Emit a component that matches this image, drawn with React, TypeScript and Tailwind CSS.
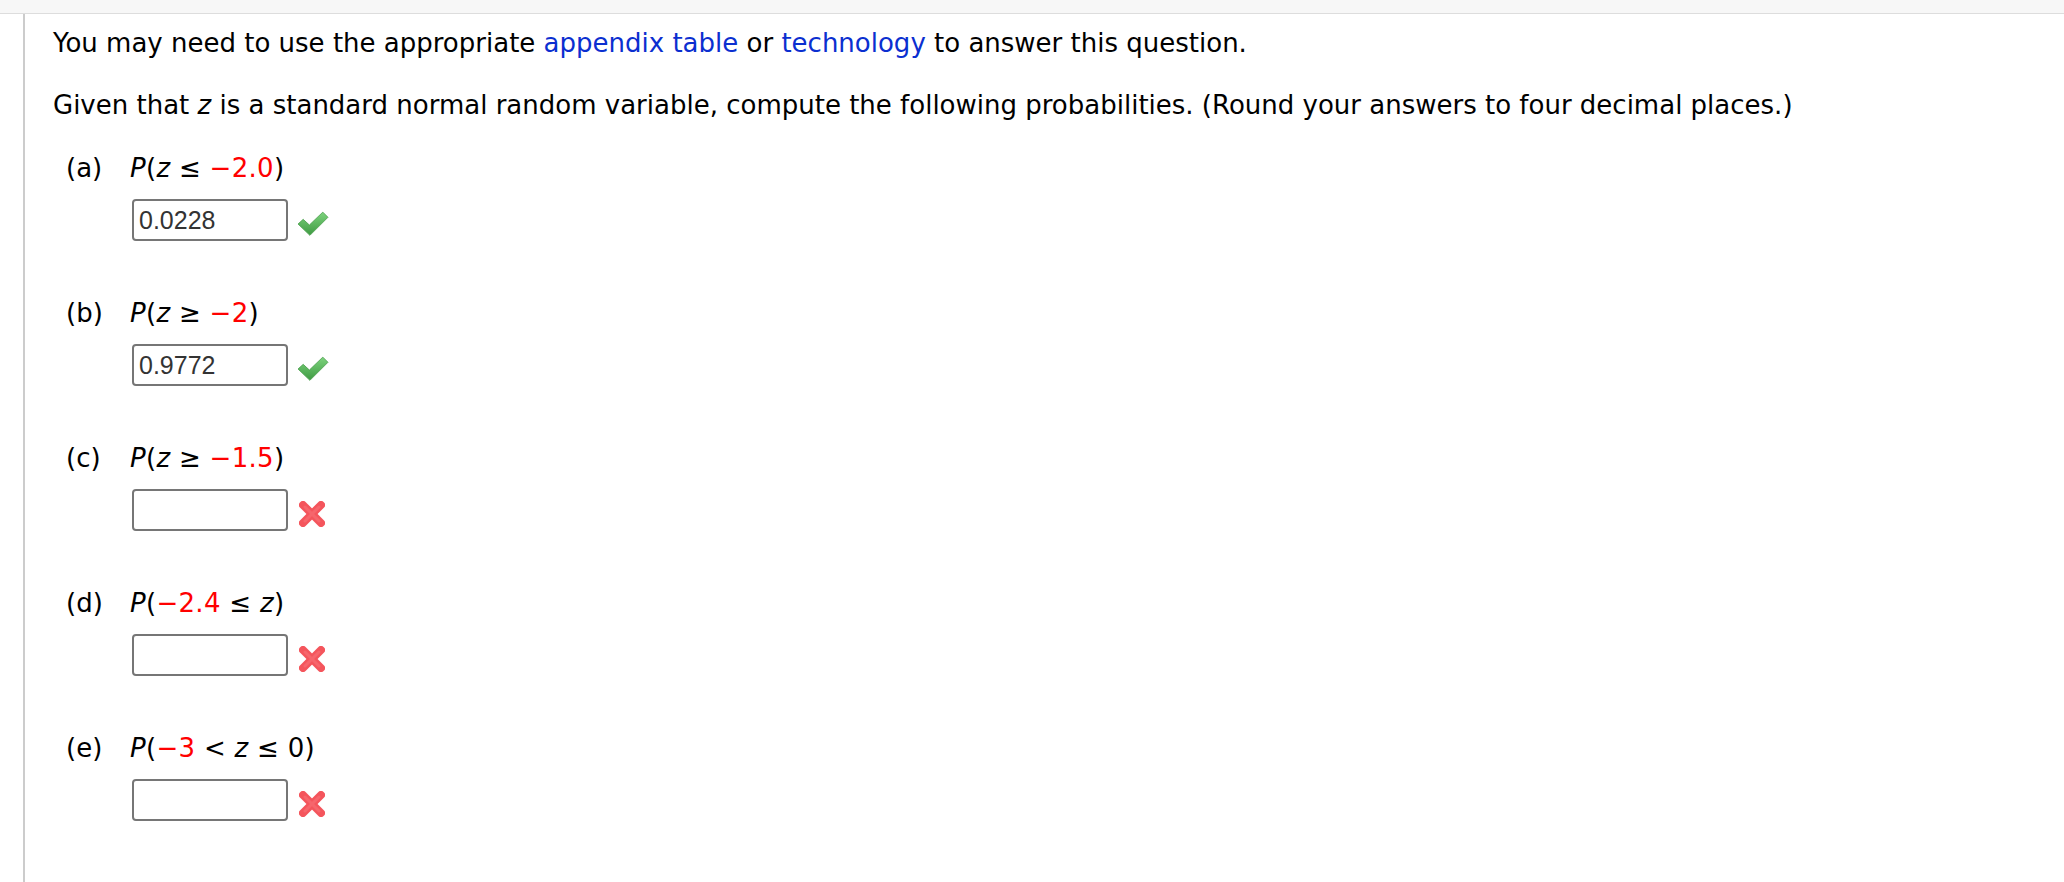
import React from "react";

const verdana = { fontFamily: '"DejaVu Sans", Verdana, sans-serif' };

function Check() {
  return (
    <svg width="32" height="26" viewBox="0 0 31 25" className="mt-[12px]">
      <defs>
        <linearGradient id="gc" x1="0" y1="0" x2="0" y2="1">
          <stop offset="0" stopColor="#7cd37c" />
          <stop offset="1" stopColor="#3f9a43" />
        </linearGradient>
      </defs>
      <path
        d="M1 12.5 L6 8 L12 13.5 L25 1 L30 6 L12.5 23.5 Z"
        fill="url(#gc)"
        stroke="#4a9f4c"
        strokeWidth="0.8"
        strokeLinejoin="round"
      />
    </svg>
  );
}

function Cross() {
  return (
    <svg width="30" height="32" viewBox="0 0 30 32" className="mt-[9px]">
      <defs>
        <filter id="bl" x="-20%" y="-20%" width="140%" height="140%">
          <feGaussianBlur stdDeviation="0.7" />
        </filter>
      </defs>
      <g filter="url(#bl)" stroke="#f4555c" strokeWidth="8" strokeLinecap="round">
        <line x1="6" y1="7" x2="24" y2="25" />
        <line x1="24" y1="7" x2="6" y2="25" />
      </g>
      <g stroke="#f87278" strokeWidth="3" strokeLinecap="round" opacity="0.6">
        <line x1="8" y1="9" x2="22" y2="23" />
        <line x1="22" y1="9" x2="8" y2="23" />
      </g>
    </svg>
  );
}

function Item({
  label,
  expr,
  value,
  ok,
}: {
  label: string;
  expr: React.ReactNode;
  value: string;
  ok: boolean;
}) {
  return (
    <div className="h-[145px]">
      <div className="flex items-center h-[36px]">
        <span className="w-[77px] pl-[13px] shrink-0">{label}</span>
        <span className="tracking-[0.3px]">{expr}</span>
      </div>
      <div className="flex ml-[79px] mt-[13px]">
        <div
          className="w-[156px] h-[42px] border-2 border-[#767676] rounded-[4px] flex items-center pl-[5px] text-[25px] text-[#333]"
          style={{ fontFamily: '"Liberation Sans", Arial, sans-serif' }}
        >
          {value}
        </div>
        <div className="ml-[9px]">{ok ? <Check /> : <Cross />}</div>
      </div>
    </div>
  );
}

const R = ({ children }: { children: React.ReactNode }) => (
  <span className="text-[#ff0000]">{children}</span>
);
const I = ({ children }: { children: React.ReactNode }) => <i>{children}</i>;

export default function App() {
  return (
    <div className="w-[2064px] h-[882px] bg-white text-black overflow-hidden" style={verdana}>
      <div className="h-[14px] bg-[#f7f7f7] border-b border-[#dddddd]" />
      <div className="flex h-[868px]">
        <div className="w-[23px] shrink-0" />
        <div className="w-[2px] bg-[#cccccc] shrink-0" />
        <div className="pl-[28px] pt-[11px] text-[26px] leading-[36px]">
          <p>
            You may need to use the appropriate{" "}
            <span className="text-[#0b2fd0]">appendix table</span> or{" "}
            <span className="text-[#0b2fd0]">technology</span> to answer this question.
          </p>
          <p className="mt-[26px]">
            Given that <I>z</I> is a standard normal random variable, compute the following
            probabilities. (Round your answers to four decimal places.)
          </p>
          <div className="mt-[27px]">
            <Item
              label="(a)"
              expr={
                <>
                  <I>P</I>(<I>z</I> ≤ <R>−2.0</R>)
                </>
              }
              value="0.0228"
              ok
            />
            <Item
              label="(b)"
              expr={
                <>
                  <I>P</I>(<I>z</I> ≥ <R>−2</R>)
                </>
              }
              value="0.9772"
              ok
            />
            <Item
              label="(c)"
              expr={
                <>
                  <I>P</I>(<I>z</I> ≥ <R>−1.5</R>)
                </>
              }
              value=""
              ok={false}
            />
            <Item
              label="(d)"
              expr={
                <>
                  <I>P</I>(<R>−2.4</R> ≤ <I>z</I>)
                </>
              }
              value=""
              ok={false}
            />
            <Item
              label="(e)"
              expr={
                <>
                  <I>P</I>(<R>−3</R> &lt; <I>z</I> ≤ 0)
                </>
              }
              value=""
              ok={false}
            />
          </div>
        </div>
      </div>
    </div>
  );
}
